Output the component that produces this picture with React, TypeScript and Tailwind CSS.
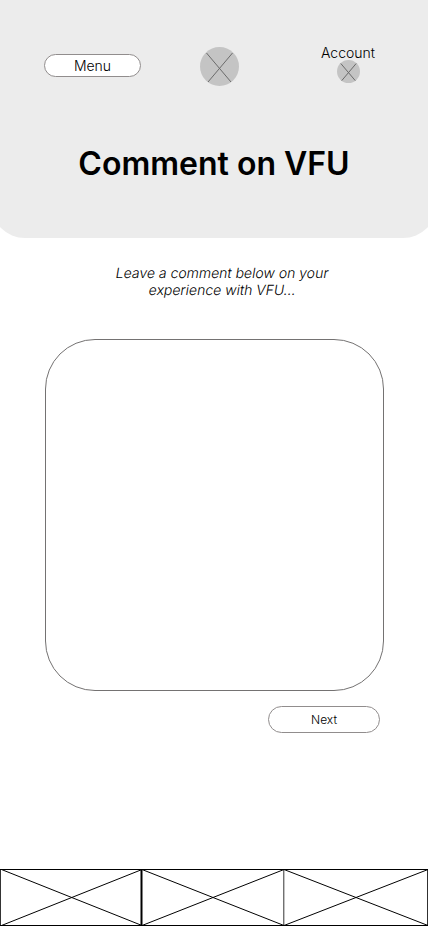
function Cross({ className }: { className: string }) {
  return (
    <svg className={className} viewBox="0 0 39 39" fill="none">
      <circle cx="19.5" cy="19.5" r="19.5" fill="#c4c4c4" />
      <path d="M6.5 6L31 35M32.5 6L8 35" stroke="#6b6b6b" strokeWidth="1" vectorEffect="non-scaling-stroke" />
    </svg>
  );
}

function FooterNav() {
  return (
    <svg className="block h-[58px] w-full" viewBox="0 868 428 58" fill="none" stroke="#000">
      <path d="M0 869.5H428M0 925.5H428" strokeWidth="1.1" />
      <path d="M0.5 869V926M283.8 869V926" strokeWidth="0.8" />
      <path d="M141.5 869V926" strokeWidth="2" />
      <path d="M427.7 869V926" strokeWidth="1" />
      <path d="M1.5 869.5L142 925.5M142 869.5L1.5 925.5M142 869.5L284 925.5M284 869.5L142 925.5M284 869.5L428 925.5M428 869.5L284 925.5" />
    </svg>
  );
}

export default function App() {
  return (
    <div className="flex h-[926px] w-[428px] flex-col overflow-hidden bg-white font-['Inter',sans-serif] text-black">
      <header className="-mx-[9px] flex h-[238px] shrink-0 flex-col rounded-b-[34px] bg-[#ececec] px-[9px]">
        <div className="flex h-[87px] items-start">
          <button className="mt-[54px] ml-[44px] flex h-[23px] w-[97px] items-center justify-center rounded-full border border-[#918d8d] bg-white text-[14px] font-light">
            Menu
          </button>
          <Cross className="mt-[47px] ml-[59px] size-[39px]" />
          <div className="mt-[45px] ml-[79px] flex w-[60px] flex-col items-center">
            <span className="text-[14px] leading-[15px] font-light">Account</span>
            <Cross className="size-[23px]" />
          </div>
        </div>
        <h1 className="mt-[57px] text-center text-[32px] leading-[40px] font-semibold whitespace-nowrap">Comment on VFU</h1>
      </header>
      <div className="mt-[26px] ml-[16px] flex flex-col items-center text-[14px] leading-[17px] font-light">
        <span className="-skew-x-[9.4deg]">Leave a comment below on your</span>
        <span className="-skew-x-[9.4deg]">experience with VFU...</span>
      </div>
      <div className="mt-[41px] ml-[45px] h-[352px] w-[339px] shrink-0 rounded-[50px] border border-[#747272]" />
      <button className="mt-[15px] ml-[268px] flex h-[27px] w-[112px] shrink-0 items-center justify-center rounded-full border border-[#918d8d] bg-white pt-px text-[12px] font-light">
        Next
      </button>
      <footer className="mt-auto">
        <FooterNav />
      </footer>
    </div>
  );
}
